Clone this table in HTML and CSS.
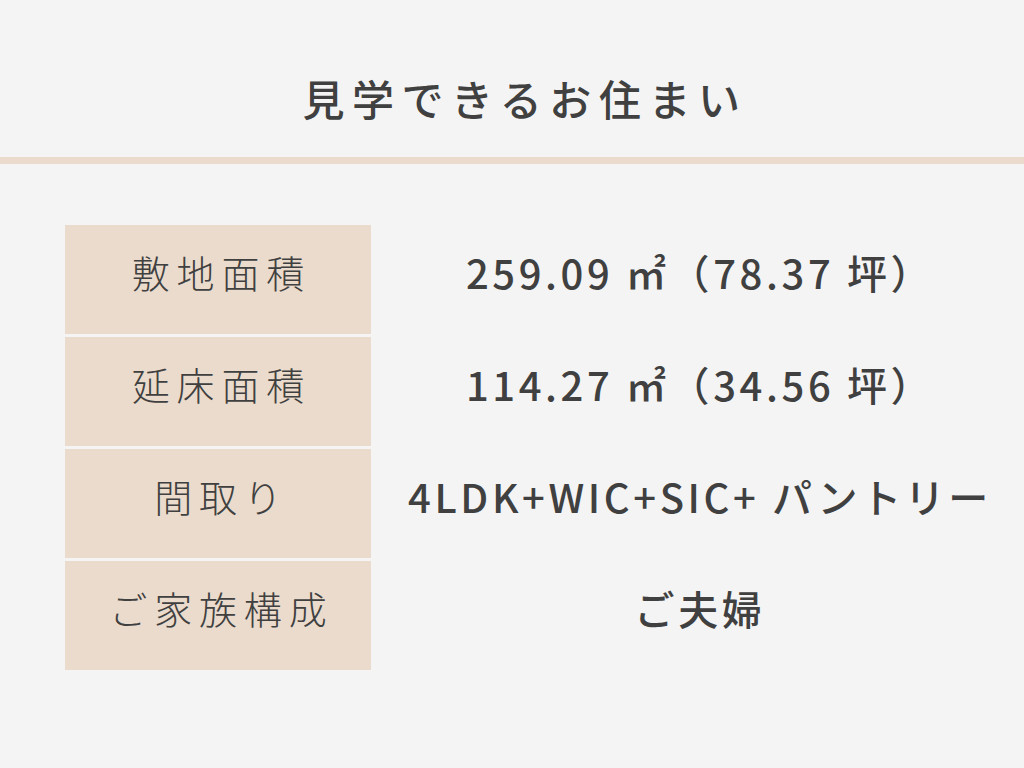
FILE: index.html
```html
<!DOCTYPE html>
<html lang="ja">
<head>
<meta charset="utf-8">
<title>見学できるお住まい</title>
<link rel="stylesheet" href="styles.css">
</head>
<body>
<header class="head">
  <h1 class="title">見学できるお住まい</h1>
</header>
<main class="spec">
  <div class="row">
    <div class="label">敷地面積</div>
    <div class="value">259.09 ㎡（78.37 坪）</div>
  </div>
  <div class="row">
    <div class="label">延床面積</div>
    <div class="value">114.27 ㎡（34.56 坪）</div>
  </div>
  <div class="row">
    <div class="label">間取り</div>
    <div class="value">4LDK+WIC+SIC+ パントリー</div>
  </div>
  <div class="row">
    <div class="label">ご家族構成</div>
    <div class="value">ご夫婦</div>
  </div>
</main>
</body>
</html>
```

FILE: styles.css
```css
html, body {
  margin: 0;
  padding: 0;
  background: #f4f4f4;
  color: #404040;
  font-family: "Noto Sans CJK JP", "Noto Sans", sans-serif;
}
body {
  width: 1024px;
  height: 768px;
  overflow: hidden;
}
.head {
  height: 157px;
  border-bottom: 7px solid #eadbcc;
  display: flex;
  align-items: center;
  justify-content: center;
  padding-top: 38px;
  box-sizing: border-box;
  height: 164px;
}
.title {
  margin: 0;
  padding-left: 26px;
  font-size: 42px;
  font-weight: 500;
  letter-spacing: 0.18em;
  line-height: 1;
}
.spec {
  margin: 61px 15px 0 65px;
  display: flex;
  flex-direction: column;
  gap: 3px;
}
.row {
  display: grid;
  grid-template-columns: 306px 1fr;
  height: 109px;
}
.label {
  background: #eadbcc;
  display: flex;
  align-items: center;
  justify-content: center;
  font-size: 38px;
  font-weight: 300;
  letter-spacing: 0.18em;
  padding-left: 0.18em;
  padding-bottom: 16px;
  box-sizing: border-box;
}
.value {
  display: flex;
  align-items: center;
  justify-content: center;
  font-size: 40px;
  font-weight: 500;
  letter-spacing: 0.09em;
  padding-left: 20px;
  padding-bottom: 16px;
  box-sizing: border-box;
  white-space: nowrap;
}
```
